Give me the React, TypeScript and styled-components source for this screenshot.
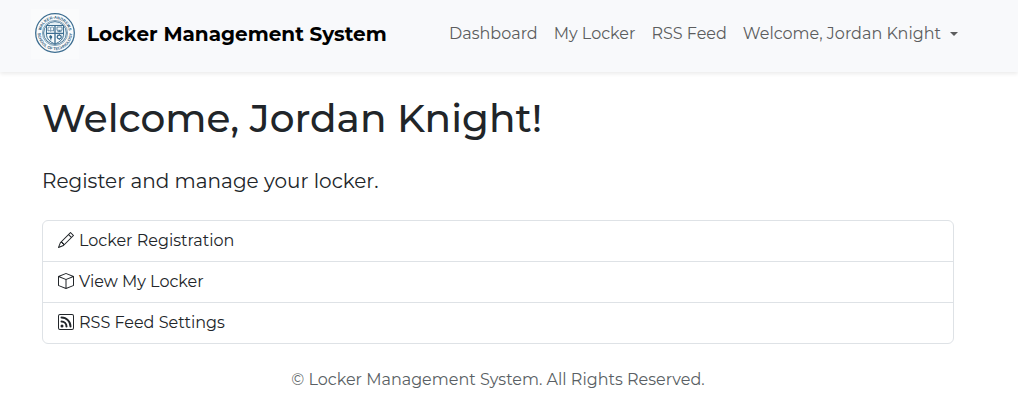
import React from "react";
import styled, { createGlobalStyle } from "styled-components";
import { BsBox, BsPencil, BsRss } from "react-icons/bs";

const GlobalStyle = createGlobalStyle`
  *, *::before, *::after { box-sizing: border-box; }
  body {
    margin: 0;
    background: #fff;
    color: #212529;
    font-family: Montserrat, Inter, "Liberation Sans", sans-serif;
    font-size: 16px;
    line-height: 24px;
  }
`;

const Header = styled.header`
  display: flex;
  align-items: flex-start;
  justify-content: space-between;
  padding: 9px 60px 13px 31px;
  background: #f8f9fb;
  box-shadow: 0 2px 4px rgba(0, 0, 0, 0.08);
`;

const Brand = styled.a`
  display: flex;
  align-items: center;
  gap: 8px;
  color: #000;
  font-size: 20px;
  font-weight: 700;
  line-height: 30px;
  white-space: nowrap;
  text-decoration: none;
`;

const Seal = styled.svg`
  width: 48px;
  height: 50px;
  background: #fafbfc;
`;

const SealText = styled.text`
  fill: #2f6080;
  font-family: "Liberation Sans", sans-serif;
  font-size: 4px;
  font-weight: 700;
`;

const Nav = styled.nav`
  display: flex;
  gap: 16px;
  padding-top: 13px;
  color: #5c5d5e;
  white-space: nowrap;
`;

const NavLink = styled.a`
  color: inherit;
  text-decoration: none;
`;

const UserMenu = styled.button`
  display: flex;
  align-items: center;
  gap: 9px;
  padding: 0;
  border: 0;
  background: none;
  color: inherit;
  font: inherit;

  &::after {
    content: "";
    border: 4px solid transparent;
    border-top-color: currentColor;
    border-bottom: 0;
  }
`;

const Main = styled.main`
  padding: 22px 64px 0 42px;
`;

const Title = styled.h1`
  margin: 0;
  font-size: 39px;
  font-weight: 500;
  line-height: 48px;
`;

const Lead = styled.p`
  margin: 24px 0;
  font-size: 20px;
  line-height: 30px;
`;

const ActionList = styled.nav`
  display: flex;
  flex-direction: column;
  border: 1px solid #dee2e6;
  border-radius: 6px;
`;

const ActionLink = styled.a`
  display: flex;
  align-items: center;
  gap: 5px;
  padding: 8px 15px;
  color: #212529;
  text-decoration: none;

  & + & { border-top: 1px solid #dee2e6; }
  svg { width: 16px; height: 16px; margin-bottom: 2px; }
`;

const Footer = styled.footer`
  padding: 24px 64px 24px 42px;
  color: #5a5f64;
  text-align: center;
`;

const navLinks = ["Dashboard", "My Locker", "RSS Feed"];

const actions = [
  { label: "Locker Registration", Icon: BsPencil },
  { label: "View My Locker", Icon: BsBox },
  { label: "RSS Feed Settings", Icon: BsRss },
];

function SchoolSeal() {
  return (
    <Seal viewBox="0 1 48 50" role="img" aria-label="School seal">
      <defs>
        <path id="seal-top" d="M9.9 25a14.1 14.1 0 0 1 28.2 0" />
        <path id="seal-bottom" d="M6.9 25a17.1 17.1 0 0 0 34.2 0" />
      </defs>
      <g fill="none" stroke="#3d6e91">
        <circle cx="24" cy="25" r="19.3" strokeWidth="1.3" />
        <circle cx="24" cy="25" r="12.6" strokeWidth=".6" />
        <circle cx="24" cy="25" r="11.4" fill="#e5f0f5" strokeWidth=".9" />
        <path d="M15.500 17.500h17v8.500c0 5-3.500 8-8.500 10C19 34 15.500 31 15.500 26Z" fill="#f7fbfc" strokeWidth="1" />
        <path d="M24 17v19M15.500 25.300h17" strokeWidth="1.3" />
        <path d="M17 19.500c1.200-.7 2-.5 2.700.2.800-.7 1.700-.9 2.800-.2v3.500c-1.100-.6-2-.4-2.800.2-.8-.6-1.600-.8-2.700-.2ZM19.700 19.700v3.500" strokeWidth=".7" />
        <path d="M26 19h5v3.300h-5ZM28.500 22.300v1.300M26.500 23.600h4" strokeWidth=".8" />
        <circle cx="28.300" cy="29" r="1.900" strokeWidth="1.100" />
        <path d="M28.300 26.100v1M28.300 30.900v1M25.400 29h1M30.200 29h1M26.300 27l.7.700M29.600 30.300l.7.700M30.300 27l-.7.700M27 30.300l-.7.700" />
      </g>
      <path d="M19.500 27c2.200 1.200 2.200 2.500.9 3.500l-.4 2.700-.8-2.700c-1.600-1.200-1.100-2.400.3-3.500Z" fill="#326789" />
      <SealText textAnchor="middle">
        <textPath href="#seal-top" startOffset="50%">WALKER-ANDREWS</textPath>
      </SealText>
      <SealText textAnchor="middle">
        <textPath href="#seal-bottom" startOffset="50%">SCHOOL OF TECHNOLOGY</textPath>
      </SealText>
    </Seal>
  );
}

export default function App() {
  return (
    <>
      <GlobalStyle />
      <Header>
        <Brand href="#">
          <SchoolSeal />
          Locker Management System
        </Brand>
        <Nav aria-label="Main">
          {navLinks.map((label) => (
            <NavLink key={label} href="#">{label}</NavLink>
          ))}
          <UserMenu type="button" aria-haspopup="menu">Welcome, Jordan Knight</UserMenu>
        </Nav>
      </Header>
      <Main>
        <Title>Welcome, Jordan Knight!</Title>
        <Lead>Register and manage your locker.</Lead>
        <ActionList aria-label="Locker actions">
          {actions.map(({ label, Icon }) => (
            <ActionLink key={label} href="#">
              <Icon aria-hidden="true" />
              {label}
            </ActionLink>
          ))}
        </ActionList>
      </Main>
      <Footer>© Locker Management System. All Rights Reserved.</Footer>
    </>
  );
}
